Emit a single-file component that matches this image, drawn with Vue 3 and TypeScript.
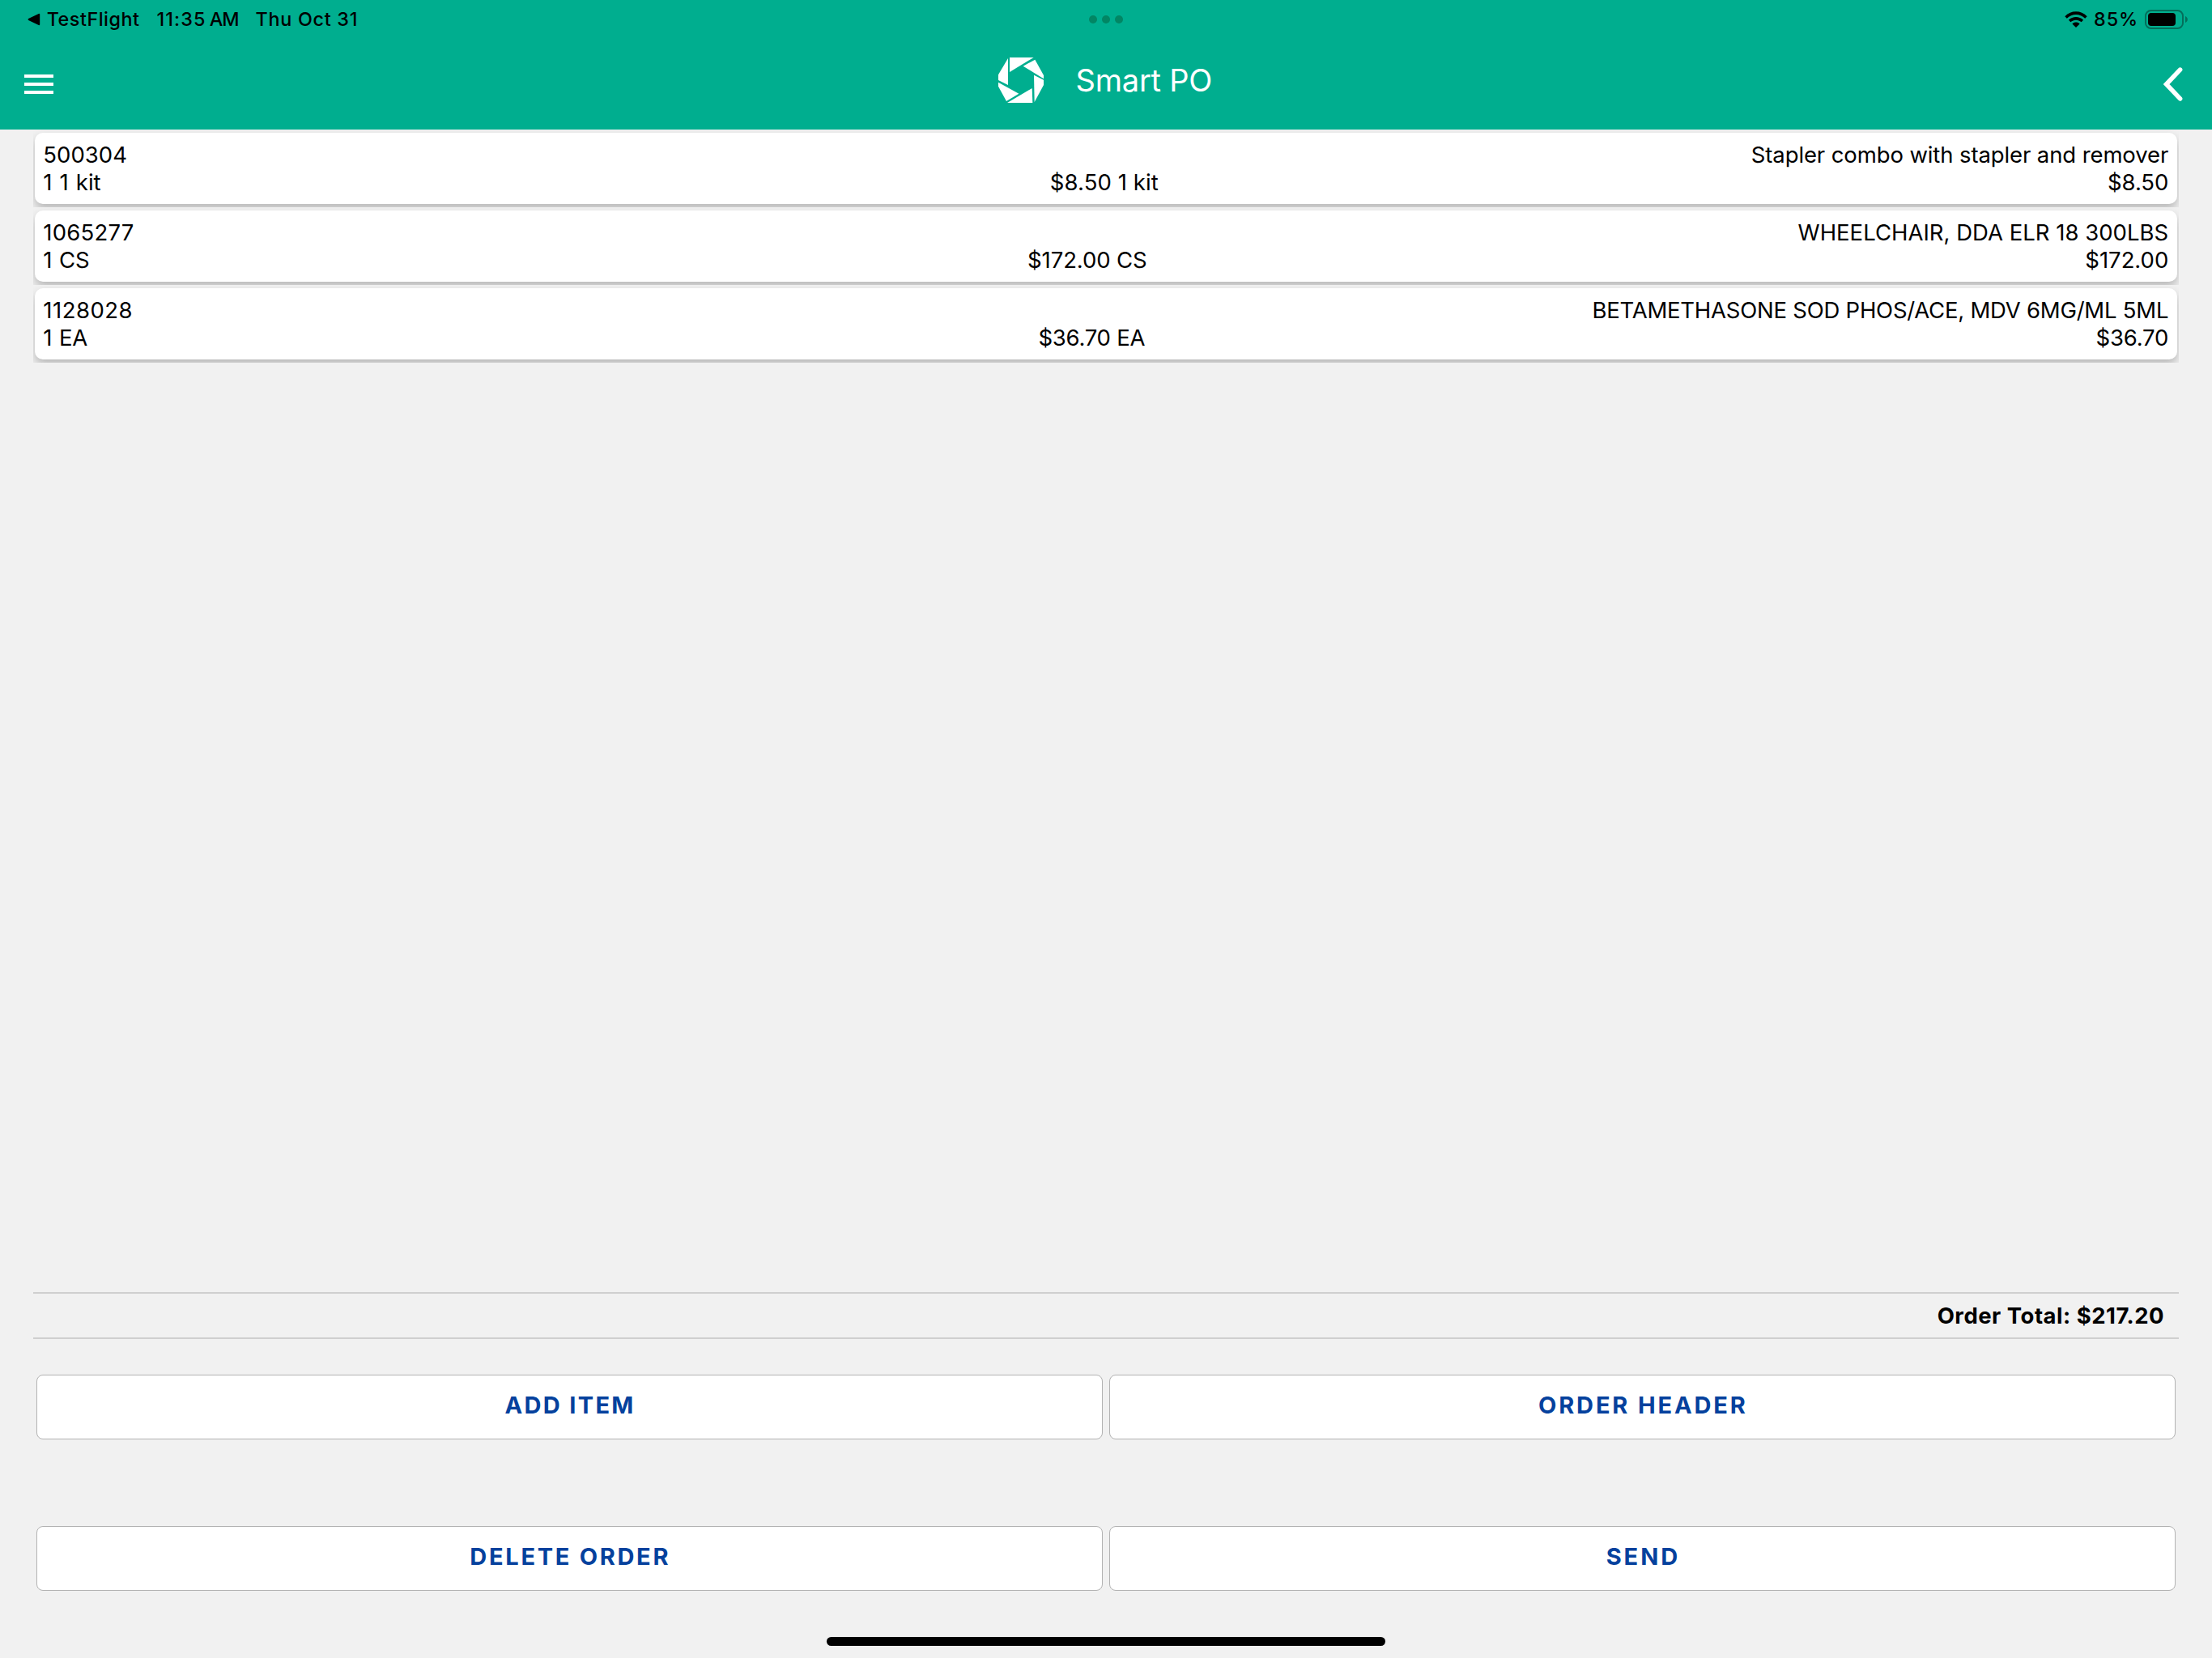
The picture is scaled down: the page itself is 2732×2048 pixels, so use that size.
<script setup lang="ts">
interface Label {
  text: string
  tracking: number
}

interface OrderLine {
  item: Label
  name: Label
  quantity: Label
  price: Label
  total: Label
}

const label = (text: string, tracking: number): Label => ({ text, tracking })

const lines: OrderLine[] = [
  {
    item: label('500304', 0.03),
    name: label('Stapler combo with stapler and remover', -0.11),
    quantity: label('1 1 kit', 0.05),
    price: label('$8.50 1 kit', 0.095),
    total: label('$8.50', -0.1),
  },
  {
    item: label('1065277', 0.221),
    name: label('WHEELCHAIR, DDA ELR 18 300LBS', 0.01),
    quantity: label('1 CS', -0.2),
    price: label('$172.00 CS', -0.1),
    total: label('$172.00', -0.03),
  },
  {
    item: label('1128028', 0.488),
    name: label('BETAMETHASONE SOD PHOS/ACE, MDV 6MG/ML 5ML', -0.235),
    quantity: label('1 EA', -0.2),
    price: label('$36.70 EA', -0.26),
    total: label('$36.70', -0.18),
  },
]

const actions: Label[][] = [
  [label('ADD ITEM', 2.35), label('ORDER HEADER', 2.85)],
  [label('DELETE ORDER', 2.7), label('SEND', 2.93)],
]

const tracked = (l: Label) => ({ letterSpacing: `${l.tracking}px` })
const centered = (l: Label) => ({ letterSpacing: `${l.tracking}px`, marginRight: `${1.2 - l.tracking}px` })
</script>

<template>
  <div class="screen">
    <header class="header">
      <div class="status">
        <div class="status-left">
          <svg class="return" width="16" height="16" viewBox="0 0 16 16">
            <path d="M1.6 8 14.2 1.8V14.2Z" fill="#000" stroke="#000" stroke-width="2" stroke-linejoin="round" />
          </svg>
          <span class="app-name">TestFlight</span>
          <span class="clock">11:35</span>
          <span class="meridiem">AM</span>
          <span class="date">Thu Oct 31</span>
        </div>
        <div class="dots"><i></i><i></i><i></i></div>
        <div class="status-right">
          <svg class="wifi" width="28" height="21" viewBox="0 0 28 21">
            <path d="M0.3 6.2C7.9-1.7 20.1-1.7 27.7 6.2L25.2 8.7C19 2.3 9 2.3 2.8 8.7Z" />
            <path d="M4.9 10.8C10 5.8 18 5.8 23.1 10.8L20.6 13.3C16.9 9.8 11.1 9.8 7.4 13.3Z" />
            <path d="M9.4 15.4C12 13 16 13 18.6 15.4L14 20Z" />
          </svg>
          <span class="percent">85%</span>
          <svg class="battery" width="54" height="24" viewBox="0 0 54 24">
            <rect x="1" y="1" width="46" height="22" rx="6.6" fill="none" stroke="#046e5b" stroke-width="2" />
            <rect x="4" y="4" width="34" height="16" rx="4" fill="#000" />
            <path d="M50 8C53.8 9.4 53.8 14.6 50 16Z" fill="#046e5b" />
          </svg>
        </div>
      </div>
      <div class="toolbar">
        <div class="menu"><i></i><i></i><i></i></div>
        <div class="brand">
          <svg class="logo" width="56" height="56" viewBox="0 0 168 168" fill="#fff">
            <path d="M42 0H131L42 54Z" />
            <path d="M92 32 136 8 168 66V79Z" />
            <path d="M132 65 168 83V102L134 165Z" />
            <path d="M125 114 127 168H33Z" />
            <path d="M0 92 76 134 30 162 0 107Z" />
            <path d="M36 3V102L0 84V64Z" />
          </svg>
          <h1>Smart PO</h1>
        </div>
        <svg class="back" width="26" height="44" viewBox="0 0 26 44">
          <path d="M21.6 4.1 4.6 22 21.6 39.9" fill="none" stroke="#fff" stroke-width="5.6" stroke-linecap="round" stroke-linejoin="miter" />
        </svg>
      </div>
    </header>

    <main class="content">
      <div class="list">
        <div v-for="line in lines" :key="line.item.text" class="slot">
          <div class="card">
            <div class="row">
              <span :style="tracked(line.item)">{{ line.item.text }}</span>
              <span :style="tracked(line.name)">{{ line.name.text }}</span>
            </div>
            <div class="row">
              <span class="quantity" :style="tracked(line.quantity)">{{ line.quantity.text }}</span>
              <span :style="tracked(line.price)">{{ line.price.text }}</span>
              <span :style="tracked(line.total)">{{ line.total.text }}</span>
            </div>
          </div>
        </div>
      </div>

      <div class="total">Order Total: $217.20</div>

      <div v-for="(group, i) in actions" :key="i" class="actions">
        <button v-for="action in group" :key="action.text" type="button">
          <span :style="centered(action)">{{ action.text }}</span>
        </button>
      </div>
    </main>

    <footer class="home"><i></i></footer>
  </div>
</template>

<style>
body {
  margin: 0;
  background: #f1f1f1;
}
</style>

<style scoped>
.screen {
  display: flex;
  flex-direction: column;
  width: 2732px;
  height: 2048px;
  overflow: hidden;
  box-sizing: border-box;
  background: #f1f1f1;
  color: #000;
  font-family: Inter, 'Liberation Sans', sans-serif;
}

.header {
  height: 160px;
  flex: none;
  background: #00ae8f;
}

.status {
  display: grid;
  grid-template-columns: 1fr auto 1fr;
  align-items: center;
  height: 48px;
  font-size: 23.3px;
  line-height: 48px;
  font-weight: 500;
}

.status-left,
.status-right {
  display: flex;
  align-items: center;
  white-space: nowrap;
}

.status-left {
  padding-left: 33.5px;
}

.return {
  margin-right: 8.2px;
}

.app-name {
  width: 135.8px;
  letter-spacing: 0.53px;
}

.clock {
  width: 65.2px;
  letter-spacing: 1.1px;
}

.meridiem {
  width: 56.8px;
  letter-spacing: -0.9px;
}

.date {
  letter-spacing: 0.75px;
}

.dots {
  display: flex;
  gap: 6px;
}

.dots i {
  width: 10px;
  height: 10px;
  border-radius: 50%;
  background: #028664;
}

.status-right {
  justify-content: flex-end;
  padding-right: 29px;
}

.wifi {
  margin-right: 8px;
}

.percent {
  width: 63px;
  letter-spacing: 1px;
}

.toolbar {
  display: grid;
  grid-template-columns: 1fr auto 1fr;
  align-items: center;
  height: 112px;
}

.menu {
  display: flex;
  flex-direction: column;
  gap: 6px;
  padding-left: 30px;
}

.menu i {
  width: 36px;
  height: 4px;
  background: #fff;
}

.brand {
  display: flex;
  align-items: center;
  height: 112px;
  padding: 0 1.6px 10px 0;
  box-sizing: border-box;
}

.logo {
  margin-right: 39.4px;
}

h1 {
  margin: 0;
  color: #fff;
  font-size: 38px;
  line-height: 56px;
  font-weight: 400;
  letter-spacing: -0.22px;
  white-space: nowrap;
}

.back {
  justify-self: end;
  margin-right: 35px;
}

.content {
  display: flex;
  flex: 1;
  flex-direction: column;
  padding: 0 41px;
}

.list {
  height: 1436px;
}

.slot {
  height: 96px;
  padding: 4px 2px;
  box-sizing: border-box;
  overflow: hidden;
}

.card {
  height: 88px;
  padding: 10px 10.8px 0 10.3px;
  box-sizing: border-box;
  border-radius: 10px;
  background: #fff;
  box-shadow: 0 6px 12px rgba(0, 0, 0, 0.24);
}

.row {
  display: flex;
  justify-content: space-between;
  font-size: 27.5px;
  line-height: 34px;
  white-space: nowrap;
}

.quantity {
  word-spacing: 1.2px;
}

.total {
  height: 58px;
  margin-bottom: 44px;
  padding-right: 18px;
  box-sizing: border-box;
  border-top: 2px solid #cfcfcf;
  border-bottom: 2px solid #cfcfcf;
  font-size: 27.5px;
  line-height: 54px;
  font-weight: 700;
  letter-spacing: 0.5px;
  text-align: right;
}

.actions {
  display: flex;
  gap: 8px;
  padding: 0 4px;
  margin-bottom: 107px;
}

.actions:last-child {
  margin-bottom: 0;
}

button {
  display: flex;
  flex: 1;
  align-items: center;
  justify-content: center;
  height: 80px;
  padding: 0 0 5px;
  box-sizing: border-box;
  border: 1px solid #b2b2b2;
  border-radius: 8px;
  background: #fff;
  color: #05419d;
  font-family: inherit;
  font-size: 29px;
  font-weight: 700;
}

.home {
  display: flex;
  justify-content: center;
  align-items: flex-end;
  height: 83px;
  flex: none;
}

.home i {
  width: 690px;
  height: 11px;
  margin-bottom: 15px;
  border-radius: 5.5px;
  background: #000;
}
</style>
